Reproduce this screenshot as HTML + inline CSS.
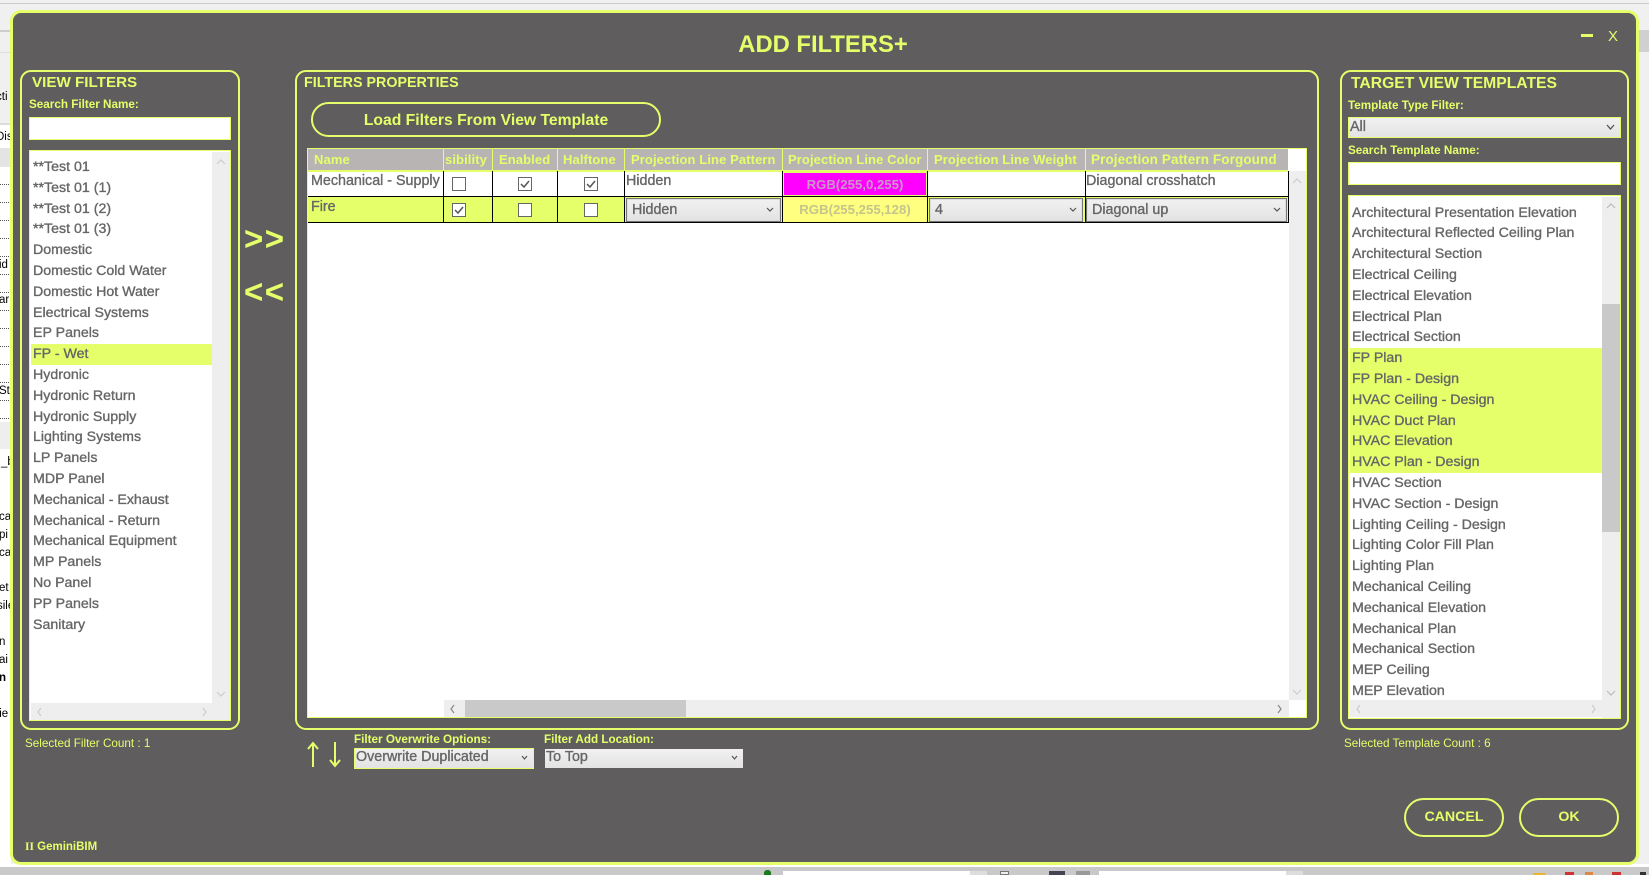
<!DOCTYPE html>
<html><head><meta charset="utf-8"><title>Add Filters+</title>
<style>
html,body{margin:0;padding:0;width:1649px;height:875px;overflow:hidden;background:#f0f0f0}
*{box-sizing:border-box}
body{position:relative;font-family:"Liberation Sans",sans-serif;color:#666}
div,span.a,svg.a{position:absolute}
.y{color:#e4ff6a}
.t{white-space:nowrap;line-height:16px;height:16px}
.h{font-weight:bold;font-size:15px;color:#e4ff6a}
.l{font-weight:bold;font-size:11.7px;color:#e4ff6a}
.g{position:absolute;border:2.5px solid #e4ff6a;border-radius:11px;top:70px;height:660px}
.in{background:#fff;border:1.5px solid #e4ff6a}
.list{font-size:14.2px;line-height:20.8px;color:#666;-webkit-text-stroke:.35px #666;white-space:nowrap}
.list p{margin:0;padding-left:2px;height:20.8px}
.list p.s{background:#e4ff6a}
.sb{background:#eee}
.c{background:linear-gradient(#f1f1f1,#e3e3e3);font-size:14.3px;-webkit-text-stroke:.35px #666;white-space:nowrap;line-height:22px}
.c2{border:1.5px solid #777;box-shadow:inset 0 0 0 1px #ddd}
.hd{font-weight:bold;font-size:13px;color:#e4ff6a;white-space:nowrap;line-height:16px;top:152px;letter-spacing:.1px}
.vs{width:1px;background:#000;top:171px;height:52px}
.vh{width:1px;background:#e4ff6a;top:149px;height:22px}
.cb{width:14px;height:14px;background:#fff;border:1px solid #666}
.rt{font-size:14.3px;-webkit-text-stroke:.35px #666;white-space:nowrap;line-height:16px}
.btn{border:2.5px solid #e4ff6a;border-radius:20px;font-weight:bold;color:#e4ff6a;text-align:center}
.f{font-size:11.5px;color:#000;white-space:nowrap;left:-1px;line-height:14px}
.d{left:0;width:11px;border-top:1px dotted #555;height:0}
</style></head>
<body>
<!-- backdrop -->
<div style="left:0;top:3px;width:1649px;height:1px;background:#ccc"></div>
<div style="left:0;top:30px;width:11px;height:2px;background:#ccc"></div>
<div style="left:0;top:52px;width:11px;height:1px;background:#ddd"></div>
<div style="left:0;top:123px;width:11px;height:2px;background:#ddd"></div>
<div style="left:0;top:125px;width:11px;height:23px;background:#fff"></div>
<div style="left:0;top:148px;width:11px;height:19px;background:#e4e4e4"></div>
<div style="left:0;top:167px;width:11px;height:255px;background:#fff"></div>
<div style="left:0;top:422px;width:11px;height:27px;background:#eee"></div>
<div style="left:0;top:449px;width:11px;height:415px;background:#fff"></div>
<div class="d" style="top:184px"></div><div class="d" style="top:202px"></div><div class="d" style="top:220px"></div><div class="d" style="top:238px"></div><div class="d" style="top:256px"></div><div class="d" style="top:274px"></div><div class="d" style="top:292px"></div><div class="d" style="top:310px"></div><div class="d" style="top:328px"></div><div class="d" style="top:346px"></div><div class="d" style="top:364px"></div><div class="d" style="top:382px"></div><div class="d" style="top:400px"></div><div class="d" style="top:418px"></div>
<div class="f" style="top:90px;left:-4px">cti</div>
<div class="f" style="top:130px;left:-4px">Dis</div>
<div class="f" style="top:258px">id</div>
<div class="f" style="top:293px">ar</div>
<div class="f" style="top:384px">St</div>
<div class="f" style="top:455px;left:1px">_b</div>
<div class="f" style="top:510px">ca</div>
<div class="f" style="top:528px">pi</div>
<div class="f" style="top:546px">cal</div>
<div class="f" style="top:581px">et</div>
<div class="f" style="top:599px;left:-3px">sile</div>
<div class="f" style="top:635px">n</div>
<div class="f" style="top:653px">ai</div>
<div class="f" style="top:671px;font-weight:bold">n</div>
<div class="f" style="top:707px;left:-4px">tie</div>
<div style="left:1639px;top:30px;width:10px;height:22px;background:#d0d0d0"></div>
<div style="left:0;top:864px;width:1649px;height:3px;background:#fff"></div>
<div style="left:0;top:867px;width:1649px;height:8px;background:#c9c9c9"></div>
<div style="left:783px;top:871px;width:187px;height:4px;background:#fff"></div>
<div style="left:970px;top:871px;width:17px;height:4px;background:#ddd"></div>
<div style="left:1099px;top:871px;width:187px;height:4px;background:#fff"></div>
<div style="left:1286px;top:871px;width:17px;height:4px;background:#ddd"></div>
<div style="left:764px;top:870px;width:7px;height:5px;background:#1a7a1a;border-radius:3px 3px 0 0"></div>
<div style="left:1000px;top:871px;width:9px;height:4px;background:#eee;border:1px solid #777"></div>
<div style="left:1049px;top:871px;width:16px;height:4px;background:#445"></div>
<div style="left:1076px;top:871px;width:14px;height:4px;background:#999"></div>
<div style="left:1533px;top:873px;width:13px;height:2px;background:#eab530"></div>
<div style="left:1565px;top:872px;width:9px;height:3px;background:#c33"></div>
<div style="left:1585px;top:872px;width:8px;height:3px;background:#d84"></div>
<div style="left:1612px;top:872px;width:9px;height:3px;background:#c33"></div>
<div style="left:1640px;top:872px;width:6px;height:3px;background:#333"></div>

<!-- window -->
<div style="left:10px;top:10px;width:1629px;height:855px;background:#5f5d5e;border:3px solid #e4ff6a;border-radius:11px"></div>
<div class="t" style="left:623px;top:33px;width:400px;height:24px;line-height:24px;text-align:center;font-weight:bold;font-size:23.8px;color:#e4ff6a">ADD FILTERS+</div>
<div style="left:1581px;top:34px;width:12px;height:3px;background:#e4ff6a"></div>
<div class="t y" style="left:1608px;top:29px;font-size:15px">X</div>

<!-- left group -->
<div class="g" style="left:20px;width:220px"></div>
<div class="t h" style="left:32px;top:75px;font-size:15.2px">VIEW FILTERS</div>
<div class="t l" style="left:29px;top:97px">Search Filter Name:</div>
<div class="in" style="left:29px;top:117px;width:202px;height:23px"></div>
<div class="in" style="left:29px;top:150px;width:202px;height:571px"></div>
<div class="sb" style="left:212px;top:152px;width:18px;height:568px"></div>
<div class="sb" style="left:31px;top:703px;width:181px;height:17px"></div>
<div class="list" style="left:31px;top:157px;width:181px">
<p>**Test 01</p><p>**Test 01 (1)</p><p>**Test 01 (2)</p><p>**Test 01 (3)</p><p>Domestic</p><p>Domestic Cold Water</p><p>Domestic Hot Water</p><p>Electrical Systems</p><p>EP Panels</p><p class="s">FP - Wet</p><p>Hydronic</p><p>Hydronic Return</p><p>Hydronic Supply</p><p>Lighting Systems</p><p>LP Panels</p><p>MDP Panel</p><p>Mechanical - Exhaust</p><p>Mechanical - Return</p><p>Mechanical Equipment</p><p>MP Panels</p><p>No Panel</p><p>PP Panels</p><p>Sanitary</p>
</div>
<svg class="a" style="left:212px;top:152px" width="18" height="570" fill="none" stroke="#ccc" stroke-width="1.2"><path d="M5 12l4-4 4 4M5 540l4 4 4-4"/></svg>
<svg class="a" style="left:31px;top:703px" width="181" height="17" fill="none" stroke="#ccc" stroke-width="1.2"><path d="M10 5l-3 4 3 4M172 5l3 4-3 4"/></svg>
<div class="t" style="left:25px;top:736px;font-size:11.7px;color:#e4ff6a">Selected Filter Count : 1</div>

<!-- arrows -->
<div class="t" style="left:244px;top:222px;height:34px;line-height:34px;font-weight:bold;font-size:33px;color:#e4ff6a;letter-spacing:1.5px">&gt;&gt;</div>
<div class="t" style="left:244px;top:275px;height:34px;line-height:34px;font-weight:bold;font-size:33px;color:#e4ff6a;letter-spacing:1.5px">&lt;&lt;</div>

<!-- center group -->
<div class="g" style="left:295px;width:1024px"></div>
<div class="t h" style="left:304px;top:75px;font-size:14.3px">FILTERS PROPERTIES</div>
<div class="btn" style="left:311px;top:102px;width:350px;height:35px;font-size:15.7px;line-height:34px;border-radius:18px">Load Filters From View Template</div>
<div style="left:307px;top:148px;width:1000px;height:570px;background:#fff;border:1.5px solid #e4ff6a"></div>
<div style="left:308px;top:149px;width:980px;height:21px;background:#b8b4b3"></div>
<div style="left:308px;top:170px;width:980px;height:1.5px;background:#e4ff6a"></div>
<div style="left:308px;top:197px;width:980px;height:25px;background:#e4ff6a"></div>
<div style="left:308px;top:196px;width:980px;height:1px;background:#000"></div>
<div style="left:308px;top:222px;width:980px;height:1px;background:#000"></div>
<div class="vh" style="left:443px"></div><div class="vh" style="left:492px"></div><div class="vh" style="left:557px"></div><div class="vh" style="left:624px"></div><div class="vh" style="left:782px"></div><div class="vh" style="left:927px"></div><div class="vh" style="left:1085px"></div>
<div class="vs" style="left:443px"></div><div class="vs" style="left:492px"></div><div class="vs" style="left:557px"></div><div class="vs" style="left:624px"></div><div class="vs" style="left:782px"></div><div class="vs" style="left:927px"></div><div class="vs" style="left:1085px"></div><div class="vs" style="left:1288px"></div>
<div class="hd" style="left:314px">Name</div>
<div class="hd" style="left:445px">sibility</div>
<div class="hd" style="left:499px">Enabled</div>
<div class="hd" style="left:563px">Halftone</div>
<div class="hd" style="left:631px">Projection Line Pattern</div>
<div class="hd" style="left:788px">Projection Line Color</div>
<div class="hd" style="left:934px">Projection Line Weight</div>
<div class="hd" style="left:1091px;font-size:13.500px">Projection Pattern Forgound</div>
<div class="rt" style="left:311px;top:173px">Mechanical - Supply</div>
<div class="rt" style="left:311px;top:199px">Fire</div>
<div class="rt" style="left:626px;top:173px">Hidden</div>
<div class="rt" style="left:1086px;top:173px">Diagonal crosshatch</div>
<div class="cb" style="left:452px;top:177px"></div>
<div class="cb" style="left:518px;top:177px"></div><svg class="a" style="left:518px;top:177px" width="14" height="14" fill="none" stroke="#555" stroke-width="1.5"><path d="M3 7l3 3 5-6"/></svg>
<div class="cb" style="left:584px;top:177px"></div><svg class="a" style="left:584px;top:177px" width="14" height="14" fill="none" stroke="#555" stroke-width="1.5"><path d="M3 7l3 3 5-6"/></svg>
<div class="cb" style="left:452px;top:203px"></div><svg class="a" style="left:452px;top:203px" width="14" height="14" fill="none" stroke="#555" stroke-width="1.5"><path d="M3 7l3 3 5-6"/></svg>
<div class="cb" style="left:518px;top:203px"></div>
<div class="cb" style="left:584px;top:203px"></div>
<div style="left:783px;top:172px;width:144px;height:24px;background:#f0f;border:1px solid #e4ff6a;text-align:center;line-height:23px;font-size:13.2px;font-weight:bold;color:#c89ac8">RGB(255,0,255)</div>
<div style="left:783px;top:197px;width:144px;height:25px;background:#ffff80;text-align:center;line-height:25px;font-size:13.2px;font-weight:bold;color:#c4c48c">RGB(255,255,128)</div>
<div class="c c2" style="left:626px;top:198px;width:155px;height:24px;padding-left:5px">Hidden</div>
<div class="c c2" style="left:929px;top:198px;width:154px;height:24px;padding-left:5px">4</div>
<div class="c c2" style="left:1086px;top:198px;width:201px;height:24px;padding-left:5px">Diagonal up</div>
<svg class="a" style="left:0;top:0" width="1649" height="875" fill="none" stroke="#555" stroke-width="1.2"><path d="M767 208l3 3 3-3M1070 208l3 3 3-3M1274 208l3 3 3-3M522 756l2.500 3 2.500-3M732 756l2.500 3 2.500-3"/></svg>
<div class="sb" style="left:1289px;top:171px;width:17px;height:529px"></div>
<div class="sb" style="left:444px;top:700px;width:845px;height:17px"></div>
<div style="left:465px;top:700px;width:221px;height:17px;background:#c9c9c9"></div>
<svg class="a" style="left:1289px;top:171px" width="17" height="530" fill="none" stroke="#ccc" stroke-width="1.2"><path d="M4 12l4-4 4 4M4 519l4 4 4-4"/></svg>
<svg class="a" style="left:444px;top:700px" width="845" height="17" fill="none" stroke="#888" stroke-width="1.2"><path d="M10 5l-3 4 3 4M834 5l3 4-3 4"/></svg>

<!-- below table -->
<svg class="a" style="left:305px;top:740px" width="40" height="28" fill="none" stroke="#e4ff6a" stroke-width="2"><path d="M8 27V3M3 9l5-6 5 6M30 2v24M25 20l5 6 5-6"/></svg>
<div class="t l" style="left:354px;top:732px">Filter Overwrite Options:</div>
<div class="c" style="left:354px;top:748px;width:180px;height:21px;border:1.5px solid #e4ff6a;padding-left:1px;line-height:17px;font-size:14.300px">Overwrite Duplicated</div>
<div class="t l" style="left:544px;top:732px">Filter Add Location:</div>
<div class="c" style="left:545px;top:749px;width:198px;height:19px;padding-left:1px;line-height:17px;font-size:14.300px">To Top</div>
<svg class="a" style="left:0;top:0" width="1649" height="875" fill="none" stroke="#555" stroke-width="1.2"><path d="M522 756l2.500 3 2.500-3M732 756l2.500 3 2.500-3"/></svg>
<div class="t" style="left:25px;top:839px;font-size:11.5px;font-weight:bold;color:#e4ff6a"><span style="font-family:'Liberation Serif',serif">II</span> GeminiBIM</div>

<!-- right group -->
<div class="g" style="left:1340px;width:289px"></div>
<div class="t h" style="left:1351px;top:76px;font-size:15.7px">TARGET VIEW TEMPLATES</div>
<div class="t l" style="left:1348px;top:98px">Template Type Filter:</div>
<div class="c" style="left:1348px;top:117px;width:273px;height:21px;border:1.5px solid #e4ff6a;padding-left:1px;line-height:18px">All</div>
<svg class="a" style="left:1604px;top:122px" width="14" height="10" fill="none" stroke="#555" stroke-width="1.3"><path d="M3 3l3.500 4 3.500-4"/></svg>
<div class="t l" style="left:1348px;top:143px">Search Template Name:</div>
<div class="in" style="left:1348px;top:162px;width:273px;height:23px"></div>
<div class="in" style="left:1348px;top:195px;width:273px;height:524px"></div>
<div class="sb" style="left:1602px;top:197px;width:18px;height:521px"></div>
<div style="left:1602px;top:304px;width:18px;height:228px;background:#c9c9c9"></div>
<div class="list" style="left:1350px;top:202.600px;width:252px;height:497px;overflow:hidden">
<p>Architectural Presentation Elevation</p><p>Architectural Reflected Ceiling Plan</p><p>Architectural Section</p><p>Electrical Ceiling</p><p>Electrical Elevation</p><p>Electrical Plan</p><p>Electrical Section</p><p class="s">FP Plan</p><p class="s">FP Plan - Design</p><p class="s">HVAC Ceiling - Design</p><p class="s">HVAC Duct Plan</p><p class="s">HVAC Elevation</p><p class="s">HVAC Plan - Design</p><p>HVAC Section</p><p>HVAC Section - Design</p><p>Lighting Ceiling - Design</p><p>Lighting Color Fill Plan</p><p>Lighting Plan</p><p>Mechanical Ceiling</p><p>Mechanical Elevation</p><p>Mechanical Plan</p><p>Mechanical Section</p><p>MEP Ceiling</p><p>MEP Elevation</p>
</div>
<div class="sb" style="left:1350px;top:700px;width:252px;height:17px"></div>
<svg class="a" style="left:1602px;top:197px" width="18" height="510" fill="none" stroke="#bbb" stroke-width="1.2"><path d="M5 11l4-4 4 4M5 494l4 4 4-4"/></svg>
<svg class="a" style="left:1350px;top:700px" width="252" height="17" fill="none" stroke="#ccc" stroke-width="1.2"><path d="M10 5l-3 4 3 4M242 5l3 4-3 4"/></svg>
<div class="t" style="left:1344px;top:736px;font-size:11.7px;color:#e4ff6a">Selected Template Count : 6</div>

<!-- buttons -->
<div class="btn" style="left:1404px;top:798px;width:100px;height:39px;font-size:14.2px;line-height:34px">CANCEL</div>
<div class="btn" style="left:1519px;top:798px;width:100px;height:39px;font-size:14.2px;line-height:34px">OK</div>
</body></html>
